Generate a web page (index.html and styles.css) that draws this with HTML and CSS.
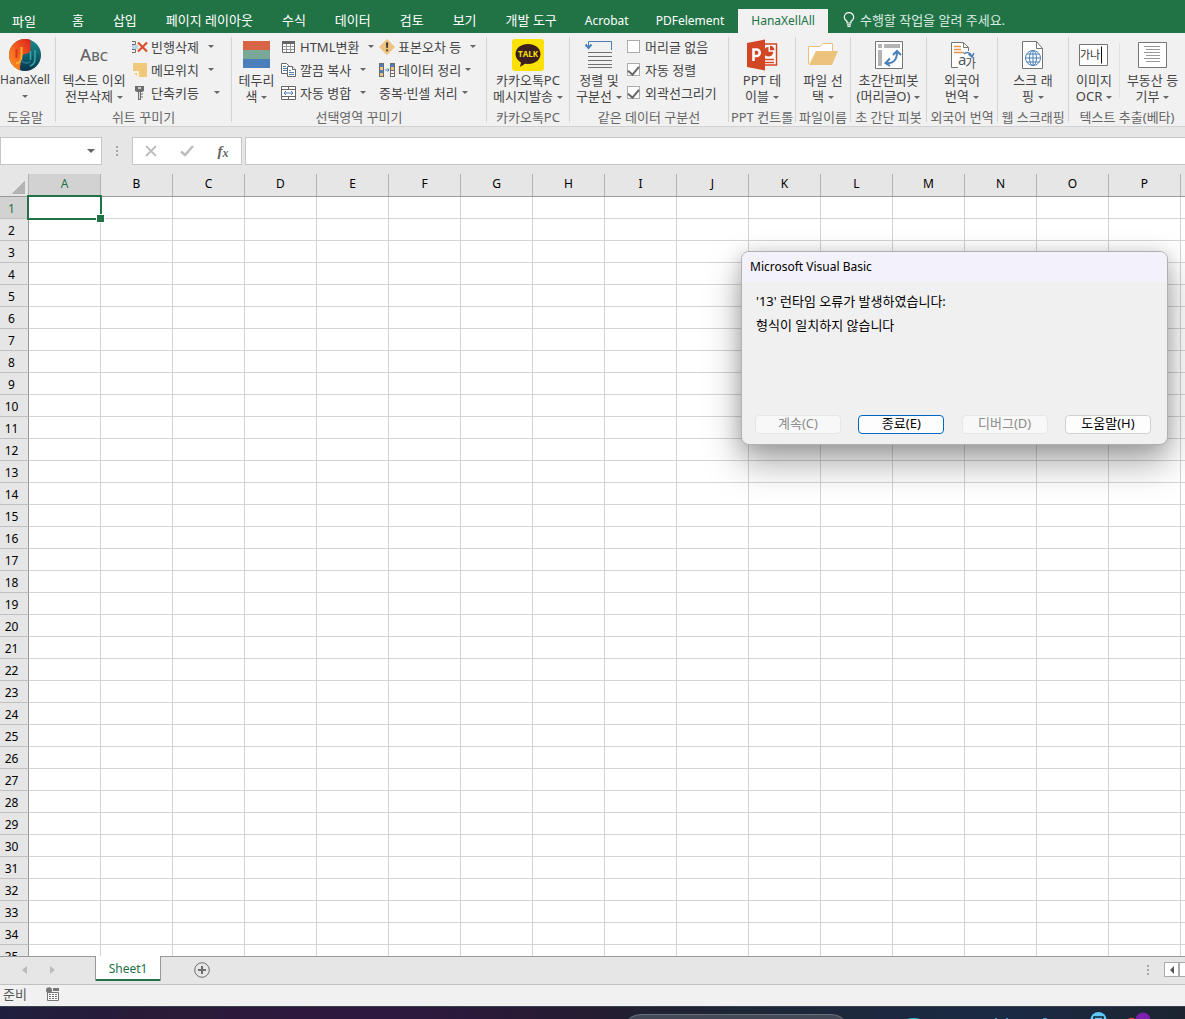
FILE: index.html
```html
<!DOCTYPE html>
<html lang="ko">
<head>
<meta charset="utf-8">
<title>Sheet1</title>
<link rel="stylesheet" href="styles.css">
</head>
<body>
<nav class="tabs">
  <button class="tab tab-file">파일</button>
  <button class="tab">홈</button>
  <button class="tab">삽입</button>
  <button class="tab">페이지 레이아웃</button>
  <button class="tab">수식</button>
  <button class="tab">데이터</button>
  <button class="tab">검토</button>
  <button class="tab">보기</button>
  <button class="tab">개발 도구</button>
  <button class="tab latin">Acrobat</button>
  <button class="tab latin">PDFelement</button>
  <button class="tab latin active">HanaXellAll</button>
  <button class="tab tell">
    <svg width="12" height="16" viewBox="0 0 12 16" fill="none" stroke="#fff" stroke-width="1.2"><path d="M4 11V9.300C2.500 8.300 1.300 7 1.300 5.200a4.700 4.500 0 0 1 9.400 0C10.700 7 9.500 8.300 8 9.300V11zM4 12.800h4M4.500 14.500h3"/></svg>
    <span>수행할 작업을 알려 주세요.</span>
  </button>
</nav>

<section class="ribbon">
  <div class="group g-help">
    <div class="tools">
      <button class="big latin">
        <svg width="32" height="32" viewBox="0 0 32 32">
          <defs><linearGradient id="warm" x1="0" y1="1" x2="1" y2="0"><stop offset="0" stop-color="#ff9a1f"/><stop offset=".5" stop-color="#f5601f"/><stop offset="1" stop-color="#dd1f1f"/></linearGradient><linearGradient id="cool" x1="0" y1="0" x2="0" y2="1"><stop offset="0" stop-color="#1b8f92"/><stop offset="1" stop-color="#06334a"/></linearGradient></defs>
          <circle cx="16" cy="16" r="16" fill="url(#cool)"/>
          <path d="M16 0C7 0 0 7 0 16c0 7.500 5 13.500 11.500 15.300C10 27 12.500 25 12 20c-.3-4 3-5 6-5.500 3-.5 3.500-3 3.500-6V1C20 .4 18 0 16 0z" fill="url(#warm)"/>
          <path d="M12.500 8v9c0 4-2 7-5.500 7.500" fill="none" stroke="#ffb02e" stroke-width="2"/>
          <path d="M7.500 10v9" stroke="#d8361d" stroke-width="2"/>
          <path d="M12.500 21c1 3 6 4 8.500 1.500" fill="none" stroke="#1f6f83" stroke-width="2"/>
          <path d="M21.500 12v9M26 11v9c0 3-2 6-5 7" fill="none" stroke="#34aaa4" stroke-width="1.500"/>
        </svg>
        <span>HanaXell<br><i class="caret solo"></i></span>
      </button>
    </div>
    <h2>도움말</h2>
  </div>
  <div class="sep"></div>

  <div class="group g-sheet">
    <div class="tools">
      <button class="big">
        <b class="abc">A<small>BC</small></b>
        <span>텍스트 이외<br>전부삭제<i class="caret"></i></span>
      </button>
      <div class="stack">
        <button class="small">
          <svg width="16" height="16" viewBox="0 0 16 16"><path d="M0 2.500h3.500v3H0M0 13.500h3.500v-3H0" fill="none" stroke="#6d6d6d"/><path d="M0 6h6v4H0z" fill="#bcd3ea"/><path d="M6 3.500l9 9M15 3.500l-9 9" stroke="#d9502e" stroke-width="2.200"/></svg>
          빈행삭제<i class="caret"></i></button>
        <button class="small">
          <svg width="16" height="16" viewBox="0 0 16 16"><path d="M1 1h14v14H6L1 10z" fill="#efc87c"/><path d="M1 10h5v5" fill="none" stroke="#fff" stroke-width="1.500"/></svg>
          메모위치<i class="caret"></i></button>
        <button class="small wide">
          <svg width="16" height="16" viewBox="0 0 16 16"><path d="M3 1h9v5l-2 1H5L3 6zM6 7h3v8H6z" fill="#6e6e6e"/><path d="M6 3h3" stroke="#f1f1f1" stroke-width="1.500"/><path d="M7.500 7v7" stroke="#ddd"/><path d="M9 9h2M9 12h2" stroke="#6e6e6e"/></svg>
          단축키등<i class="caret"></i></button>
      </div>
    </div>
    <h2>쉬트 꾸미기</h2>
  </div>
  <div class="sep"></div>

  <div class="group g-area">
    <div class="tools">
      <button class="big">
        <svg width="27" height="32" viewBox="0 0 27 32"><path d="M0 2h27v9H0z" fill="#d96445"/><path d="M0 11h27v9H0z" fill="#79a896"/><path d="M0 20h27v9H0z" fill="#4a7fba"/></svg>
        <span>테두리<br>색<i class="caret"></i></span>
      </button>
      <div class="stack stack-area">
        <button class="small">
          <svg width="16" height="16" viewBox="0 0 16 16"><path d="M1.500 2.500h12v11h-12z" fill="#fff" stroke="#666"/><path d="M1 2h13v3H1z" fill="#666"/><path d="M2 7.500h11M2 10.500h11M5.500 5v8M9.500 5v8" stroke="#999"/></svg>
          HTML변환<i class="caret"></i></button>
        <button class="small">
          <svg width="16" height="16" viewBox="0 0 16 16" fill="#fff" stroke="#666"><path d="M.5 1.500h5l3 3v7h-8z"/><path d="M2 4.500h3M2 6.500h4M2 8.500h4" stroke="#4a7fba"/><path d="M6.500 4.500h5l3 3v7h-8z"/><path d="M11.500 4.500v3h3" /><path d="M8 8.500h2M8 10.500h5M8 12.500h5" stroke="#4a7fba"/></svg>
          깔끔 복사<i class="caret"></i></button>
        <button class="small">
          <svg width="16" height="16" viewBox="0 0 16 16" fill="none" stroke="#666"><path d="M.5 1.500h14v13H.5z" fill="#fff"/><path d="M0 4.500h15M0 11.500h15M7.500 1v3M7.500 12v3"/><path d="M3 8h9M5 6L3 8l2 2M10 6l2 2-2 2" stroke="#4a7fba"/></svg>
          자동 병합<i class="caret"></i></button>
      </div>
      <div class="stack">
        <button class="small">
          <svg width="16" height="16" viewBox="0 0 16 16"><path d="M8 0l8 8-8 8-8-8z" fill="#eec27c"/><path d="M7 3.500h2.200L8.800 9H7.400zM7.200 10.500h1.800v1.800H7.200z" fill="#333"/></svg>
          표본오차 등<i class="caret"></i></button>
        <button class="small tight">
          <svg width="16" height="16" viewBox="0 0 16 16"><path d="M0 1h5v14H0zM11 1h5v14h-5z" fill="#6b6b6b"/><path d="M1 2h3v3H1zM1 8h3v3H1zM12 2h3v3h-3z" fill="#4a7fba"/><path d="M1 5h3v3H1zM1 11h3v3H1zM12 5h3v3h-3z" fill="#eec27c"/><path d="M12 9h3v2h-3zM12 12h3v2h-3z" fill="#fff"/><path d="M6 8h4M8.500 6.300L10 8 8.500 9.700" fill="none" stroke="#4a7fba"/></svg>
          데이터 정리<i class="caret"></i></button>
        <button class="small tight">중복·빈셀 처리<i class="caret"></i></button>
      </div>
    </div>
    <h2>선택영역 꾸미기</h2>
  </div>
  <div class="sep"></div>

  <div class="group g-kakao">
    <div class="tools">
      <button class="big">
        <svg width="32" height="32" viewBox="0 0 32 32"><rect width="32" height="32" rx="3" fill="#fae100"/><path d="M16 5c7 0 12.500 4.300 12.500 10S23 25 16 25l-3-.3L8 28l1-4.500C5.500 21.500 3.500 18.500 3.500 15 3.500 9.300 9 5 16 5z" fill="#3b1e1e"/><text x="16" y="18" text-anchor="middle" class="talk">TALK</text></svg>
        <span>카카오톡PC<br>메시지발송<i class="caret"></i></span>
      </button>
    </div>
    <h2>카카오톡PC</h2>
  </div>
  <div class="sep"></div>

  <div class="group g-sort">
    <div class="tools">
      <button class="big">
        <svg width="28" height="32" viewBox="0 0 28 32" fill="none"><path d="M3.500 8V2.500H26.500V11" stroke="#4a7fba" /><path d="M.5 5.500l3 3.500 3-3.500" stroke="#4a7fba" stroke-width="2"/><path d="M3 13.500h24M3 17.500h24M3 21.500h24M3 25.500h24M3 28.500h24" stroke="#707070"/></svg>
        <span>정렬 및<br>구분선<i class="caret"></i></span>
      </button>
      <div class="stack">
        <label class="check"><input type="checkbox">머리글 없음</label>
        <label class="check"><input type="checkbox" checked>자동 정렬</label>
        <label class="check"><input type="checkbox" checked>외곽선그리기</label>
      </div>
    </div>
    <h2>같은 데이터 구분선</h2>
  </div>
  <div class="sep"></div>

  <div class="group g-ppt">
    <div class="tools">
      <button class="big">
        <svg width="32" height="32" viewBox="0 0 32 32"><path d="M17 5h13.500v21H17z" fill="#fff" stroke="#d24625" stroke-width="1.500"/><path d="M22.500 8a4.800 4.800 0 1 0 4.800 4.800h-4.800z" fill="#d24625"/><path d="M24 6.800v4.500h4.500A4.500 4.500 0 0 0 24 6.800z" fill="#d24625"/><path d="M19 20.500h9M19 23.500h9" stroke="#d24625" stroke-width="1.500"/><path d="M1 4l18-3.500v31L1 28z" fill="#d24625"/><path d="M7.500 22V10.500H10.500a3.200 3.200 0 0 1 0 6.500H7.500" fill="none" stroke="#fff" stroke-width="2.600"/></svg>
        <span>PPT 테<br>이블<i class="caret"></i></span>
      </button>
    </div>
    <h2>PPT 컨트롤</h2>
  </div>
  <div class="sep"></div>

  <div class="group g-file">
    <div class="tools">
      <button class="big">
        <svg width="30" height="32" viewBox="0 0 30 32"><path d="M.5 25V7.500H12l3-3h9.500v8" fill="#fff" stroke="#e9c078"/><path d="M8 12h22l-6 14H1z" fill="#edc27d"/></svg>
        <span>파일 선<br>택<i class="caret"></i></span>
      </button>
    </div>
    <h2>파일이름</h2>
  </div>
  <div class="sep"></div>

  <div class="group g-pivot">
    <div class="tools">
      <button class="big">
        <svg width="28" height="32" viewBox="0 0 28 32"><path d="M.5 2.500h27v27H.5z" fill="#fff" stroke="#757575"/><path d="M3 5h4v4H3zM9 5h16v4H9zM3 11h4v16H3z" fill="#b3b3b3"/><path d="M11 24c7 1 11-3 11-11M18 16l4-4 4 4M15 19.500L10.500 24l4.500 3" fill="none" stroke="#4a7fba" stroke-width="2"/></svg>
        <span>초간단피봇<br>(머리글O)<i class="caret"></i></span>
      </button>
    </div>
    <h2>초 간단 피봇</h2>
  </div>
  <div class="sep"></div>

  <div class="group g-lang">
    <div class="tools">
      <button class="big">
        <svg width="28" height="32" viewBox="0 0 28 32" fill="none"><path d="M3.500 28.500v-25h12l5 5v20z" fill="#fff"/><path d="M10 28.500H3.500v-25h12l5 5V12M15.500 4v4.500h5" stroke="#757575"/><path d="M6 7.500h7M6 10.500h7M6 13.500h10" stroke="#e8944a" stroke-width="1.500"/><path d="M16 15c3-3 7-1 8 3M20.500 15l3.500 3 2-4" stroke="#4a7fba" stroke-width="1.500"/><text x="10" y="26" class="glyph-a">a</text><text x="17" y="29" class="glyph-ga">가</text></svg>
        <span>외국어<br>번역<i class="caret"></i></span>
      </button>
    </div>
    <h2>외국어 번역</h2>
  </div>
  <div class="sep"></div>

  <div class="group g-web">
    <div class="tools">
      <button class="big">
        <svg width="22" height="32" viewBox="0 0 22 32" fill="none"><path d="M.5 2.500h14l6 7v20H.5z" fill="#fff" stroke="#757575"/><path d="M14.500 2.500v7h6" stroke="#757575"/><g stroke="#4a7fba"><circle cx="11" cy="19" r="7.500"/><ellipse cx="11" cy="19" rx="3.500" ry="7.500"/><path d="M11 11.500v15M3.500 19h15M5 15h12M5 23h12"/></g></svg>
        <span>스크 래<br>핑<i class="caret"></i></span>
      </button>
    </div>
    <h2>웹 스크래핑</h2>
  </div>
  <div class="sep"></div>

  <div class="group g-text">
    <div class="tools">
      <button class="big">
        <svg width="30" height="32" viewBox="0 0 30 32"><path d="M.5 5.500h28v21H.5z" fill="#fff" stroke="#757575"/><text x="1" y="20" class="glyph-gana">가나</text><path d="M22.500 7.500v17" stroke="#111"/></svg>
        <span>이미지<br>OCR<i class="caret"></i></span>
      </button>
      <div class="sep inner"></div>
      <button class="big">
        <svg width="30" height="32" viewBox="0 0 30 32"><path d="M.5 3.500h28v25H.5z" fill="#fff" stroke="#757575"/><path d="M6 7.500h16M8 10.500h14M6 13.500h16M8 16.500h14M6 19.500h16M8 22.500h14" stroke="#999"/></svg>
        <span>부동산 등<br>기부<i class="caret"></i></span>
      </button>
    </div>
    <h2>텍스트 추출(베타)</h2>
  </div>
</section>

<section class="formula">
  <div class="namebox">
    <input type="text" aria-label="이름 상자">
    <button aria-label="이름 목록"><i class="caret"></i></button>
  </div>
  <span class="dots"><i></i><i></i><i></i></span>
  <div class="fx">
    <button aria-label="취소"><svg width="12" height="12" viewBox="0 0 12 12"><path d="M1 1l10 10M11 1L1 11" stroke="#bdbdbd" stroke-width="1.800"/></svg></button>
    <button aria-label="입력"><svg width="14" height="12" viewBox="0 0 14 12"><path d="M1 6.500L5 10l8-9" fill="none" stroke="#bdbdbd" stroke-width="2.500"/></svg></button>
    <button class="fx-sign"><i>f</i><small>x</small></button>
  </div>
  <input class="formula-input" type="text" aria-label="수식 입력줄">
</section>

<main class="sheet">
  <table>
    <thead><tr id="columns"><th class="corner"></th></tr></thead>
    <tbody id="rows"></tbody>
  </table>
</main>

<footer class="sheetbar">
  <button class="nav" aria-label="이전 시트"><svg width="5" height="8" viewBox="0 0 5 8"><path d="M5 0v8L0 4z" fill="#bbb"/></svg></button>
  <button class="nav" aria-label="다음 시트"><svg width="5" height="8" viewBox="0 0 5 8"><path d="M0 0v8l5-4z" fill="#bbb"/></svg></button>
  <button class="sheet-tab">Sheet1</button>
  <button class="add" aria-label="새 시트"><svg width="16" height="16" viewBox="0 0 16 16" fill="none" stroke="#6e6e6e"><circle cx="8" cy="8" r="7.300"/><path d="M8 4v8M4 8h8" stroke-width="2"/></svg></button>
  <span class="dots"><i></i><i></i><i></i></span>
  <button class="scroll-left" aria-label="왼쪽으로"><svg width="4" height="8" viewBox="0 0 4 8"><path d="M4 0v8L0 4z" fill="#555"/></svg></button>
  <span class="thumb"></span>
</footer>

<div class="status">
  <span>준비</span>
  <svg width="14" height="14" viewBox="0 0 14 14"><path d="M1.500 5.500h11v8h-11z" fill="#fff" stroke="#777"/><path d="M7 1h6v3H7z" fill="#777"/><circle cx="3" cy="3.200" r="3" fill="#777"/><path d="M3 7.500h8M3 9.500h8M3 11.500h8" stroke="#777" stroke-dasharray="2 1"/></svg>
</div>

<div class="taskbar">
  <svg width="560" height="12" viewBox="0 0 560 12"><path d="M0 12c3-3 8-4.500 14-4.500h188c6 0 11 1.500 14 4.500z" fill="#434a57"/><path d="M2 11c3-2 7-3.500 12-3.500h188c5 0 9 1.500 12 3.500" fill="none" stroke="#6b717c"/><path d="M279 12q7-2 13 0z" fill="#25c5dd"/><path d="M367 11h2v1h-2zM378 11h2v1h-2zM415 11h4v1h-4z" fill="#3aa0d0"/><circle cx="470.500" cy="13" r="8" fill="#5cc8fb"/><path d="M466 12v-2h9v2" fill="none" stroke="#13202e" stroke-width="1.500"/><path d="M500 12q2-2 6-1v1z" fill="#e53a2f"/><circle cx="515" cy="13" r="7.500" fill="#7d1fae"/></svg>
</div>

<div class="dialog" role="dialog" aria-labelledby="dialog-title">
  <h1 id="dialog-title">Microsoft Visual Basic</h1>
  <div class="message">
    <p>'13' 런타임 오류가 발생하였습니다:</p>
    <p>형식이 일치하지 않습니다</p>
  </div>
  <div class="actions">
    <button disabled>계속(C)</button>
    <button class="default">종료(E)</button>
    <button disabled>디버그(D)</button>
    <button>도움말(H)</button>
  </div>
</div>
<script src="sheet.js"></script>
</body>
</html>
```
FILE: styles.css
```css
* { box-sizing: border-box; }
body {
  margin: 0;
  height: 100vh;
  display: flex;
  flex-direction: column;
  overflow: hidden;
  position: relative;
  background: #e6e6e6;
  color: #444;
  font: 13px/16px "Noto Sans", "Noto Sans CJK KR", sans-serif;
}
button, input { font: inherit; color: inherit; margin: 0; padding: 0; border: 0; background: none; }
button { white-space: nowrap; }
svg { display: block; flex: none; }
h1, h2, p { margin: 0; font-weight: 400; font-size: inherit; }

/* Tabs */
.tabs { display: flex; gap: 1px; height: 33px; padding-top: 9px; background: #217346; color: #fff; flex: none; }
.tab { padding: 0 14px 2px; }
.tab-file { padding: 0 12px; margin-right: 9px; }
.tab.latin { font-size: 12px; padding: 0 13px; }
.tab.active { background: #f1f1f1; color: #217346; }
.tell { display: flex; align-items: center; gap: 5px; color: #d9ebe0; }

/* Ribbon */
.ribbon { display: flex; height: 94px; flex: none; background: #f1f1f1; border-bottom: 1px solid #d2d2d2; }
.sep { width: 1px; height: 85px; margin-top: 4px; background: #d4d4d4; flex: none; }
.sep.inner { height: 55px; margin-top: 8px; background: #e0e0e0; }
.group { display: flex; flex-direction: column; flex: none; padding-top: 2px; }
.group h2 { margin-top: 4px; text-align: center; color: #666; white-space: nowrap; }
.tools { display: flex; height: 70px; justify-content: center; }
.g-help { width: 55px; padding-right: 5px; }
.g-sheet { width: 175px; }
.g-area { width: 254px; }
.g-kakao { width: 82px; }
.g-sort { width: 158px; }
.g-ppt { width: 66px; }
.g-file { width: 54px; }
.g-pivot { width: 75px; }
.g-lang, .g-web { width: 70px; }
.g-text { flex: 1 0 116px; max-width: 116px; }
.g-sheet .tools, .g-area .tools, .g-sort .tools { justify-content: flex-start; padding-left: 4px; }
.g-sheet .big { width: 68px; margin-right: 4px; }
.g-area .big { width: 41px; margin-right: 4px; }
.g-sort .big { width: 50px; margin-right: 3px; }
.g-text .big { flex: 1 1 50px; }
.g-text .big:last-child { flex-basis: 65px; }
.big { display: flex; flex-direction: column; align-items: center; gap: 1px; padding-top: 4px; }
.big.latin { font-size: 12px; }
.abc { height: 32px; font-weight: 500; font-size: 17px; line-height: 32px; color: #666; }
.abc small { font-size: 13px; }
.stack { display: flex; flex-direction: column; align-items: flex-start; }
.stack-area { width: 98px; }
.small, .check { display: flex; align-items: center; height: 23px; gap: 3px; }
.caret { display: inline-block; border: 3px solid transparent; border-top-color: #666; border-bottom: 0; margin-left: 4px; vertical-align: middle; flex: none; }
.caret.solo { margin-left: 0; }
.small .caret { margin-left: 6px; }
.small.tight .caret { margin-left: 1px; }
.small.wide .caret { margin-left: 12px; }
.check { gap: 5px; white-space: nowrap; }
.check input { appearance: none; width: 13px; height: 13px; border: 1px solid #ababab; background: #fff; display: grid; place-items: start center; }
.check input:checked::before { content: ""; width: 5px; height: 9px; border: solid #666; border-width: 0 2px 2px 0; transform: rotate(40deg); }
.talk { font: 700 8px "Open Sans", sans-serif; fill: #fae100; }
.glyph-a { font: 15px "Noto Sans", sans-serif; fill: #555; }
.glyph-ga { font: 12px "Noto Sans CJK KR", sans-serif; fill: #555; }
.glyph-gana { font: 11px "Noto Sans CJK KR", sans-serif; fill: #333; }

/* Formula bar */
.formula { display: flex; height: 47px; padding: 10px 0 9px; flex: none; }
.namebox, .fx, .formula-input { border: 1px solid #c6c6c6; background: #fff; }
.namebox { display: flex; width: 102px; }
.namebox input { flex: 1; min-width: 0; }
.namebox button { width: 20px; padding-bottom: 4px; }
.namebox .caret { margin: 0; border-width: 4px 4px 0; }
.dots { display: flex; flex-direction: column; justify-content: center; align-items: center; gap: 2px; width: 30px; }
.dots i { width: 2px; height: 2px; background: #a6a6a6; }
.fx { display: flex; width: 110px; margin-right: 3px; }
.fx button { flex: 1; display: flex; align-items: center; justify-content: center; }
.fx .fx-sign { font: 700 15px/16px "Liberation Serif", serif; color: #666; }
.fx-sign small { font-size: 12px; font-style: italic; padding-top: 4px; }
.formula-input { flex: 1; border-right: 0; }

/* Grid */
.sheet { flex: 1; min-height: 0; overflow: hidden; background: #fff; }
table { table-layout: fixed; width: 1253px; border-collapse: separate; border-spacing: 0; font-size: 12px; }
th, td { padding: 0; height: 22px; border: solid #d4d4d4; border-width: 0 1px 1px 0; }
th { font-weight: 400; color: #000; background: #e6e6e6; text-align: center; width: 72px; }
thead th { height: 23px; padding-bottom: 3px; border-bottom-color: #999; border-right-color: #b1b1b1; }
th.corner { width: 29px; background: linear-gradient(135deg, #e6e6e6 50%, #b4b4b4 50%) 11px 6px / 14px 14px no-repeat #e6e6e6; }
tbody th { padding: 2px 5px 0 0; border-right-color: #999; border-bottom-color: #c0c0c0; }
th.current { background: #d2d2d2; color: #217346; }
td.selected { position: relative; }
td.selected::before { content: ""; position: absolute; inset: -2px; border: 2px solid #217346; }
td.selected::after { content: ""; position: absolute; right: -5px; bottom: -5px; width: 7px; height: 7px; background: #217346; border: 1px solid #fff; }

/* Sheet bar, status bar, taskbar */
.sheetbar { display: flex; align-items: center; height: 28px; flex: none; border-top: 1px solid #999; padding: 0 0 2px 10px; }
.nav { width: 28px; display: flex; justify-content: center; }
.sheet-tab { align-self: flex-start; width: 66px; height: 25px; margin: -1px 33px 0 29px; font-size: 12px; color: #217346; background: #fff; border: solid #999; border-width: 0 1px; box-shadow: inset 0 -2px #217346; }
.sheetbar .dots { margin-left: auto; width: 32px; }
.scroll-left { width: 15px; height: 15px; border: 1px solid #ababab; background: #fff; display: flex; align-items: center; justify-content: center; }
.thumb { width: 6px; height: 15px; border: 1px solid #ababab; border-right: 0; background: #fff; }
.status { display: flex; align-items: center; gap: 19px; height: 22px; flex: none; padding: 0 0 3px 3px; background: #f1f1f1; border-top: 1px solid #c0c0c0; color: #555; }
.taskbar { height: 13px; flex: none; border-top: 1px solid #3b4350; background: linear-gradient(90deg, #1f1f3c, #2b1a38 15%, #2f1840 32%, #241c30 50%, #1c2636 62%, #1b2a44 85%, #1c2430); overflow: hidden; padding-left: 628px; }

/* Error dialog */
.dialog {
  position: absolute; left: 741px; top: 251px; width: 427px; height: 194px;
  display: flex; flex-direction: column;
  border: 1px solid #b0b0b4; border-radius: 8px; overflow: hidden;
  background: #f0f0f0; color: #000;
  box-shadow: 0 18px 36px rgba(0, 0, 0, .34), 0 2px 18px rgba(0, 0, 0, .16);
}
.dialog h1 { height: 30px; padding-left: 8px; line-height: 30px; font-size: 12px; background: #f3f1f9; }
.message { padding: 7px 14px; line-height: 24px; flex: 1; }
.actions { display: flex; justify-content: space-between; padding: 0 16px 10px 13px; }
.actions button { width: 86px; height: 19px; padding-bottom: 3px; line-height: 14px; border: 1px solid #d0d0d0; border-radius: 4px; background: #fdfdfd; }
.actions button:disabled { color: #8c8c8c; border-color: #e6e6e6; background: #f8f8f8; }
.actions .default { border-color: #0067c0; }
```
FILE: sheet.js
```js
const columns = document.getElementById('columns');
const rows = document.getElementById('rows');
const letters = 'ABCDEFGHIJKLMNOP'.split('');

// One unlabelled column fills the strip at the right edge of the window.
letters.push('');

function heading(row, text, current) {
  const th = document.createElement('th');
  th.textContent = text;
  if (current) th.className = 'current';
  row.append(th);
}

letters.forEach((letter, i) => heading(columns, letter, i === 0));

for (let r = 1; r <= 35; r++) {
  const row = document.createElement('tr');
  heading(row, r, r === 1);
  letters.forEach((_, i) => {
    const cell = row.insertCell();
    if (r === 1 && i === 0) cell.className = 'selected';
  });
  rows.append(row);
}
```
